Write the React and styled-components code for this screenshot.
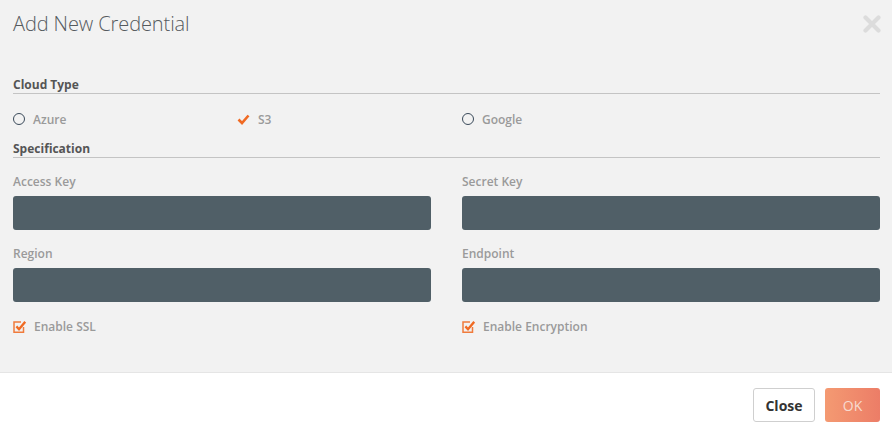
import React from 'react'
import styled, { createGlobalStyle } from 'styled-components'

const GlobalStyle = createGlobalStyle`
  html, body {
    margin: 0;
    padding: 0;
    background: #ffffff;
  }
  * { box-sizing: border-box; }
`

const clouds = [
  { name: 'Azure', checked: false },
  { name: 'S3', checked: true },
  { name: 'Google', checked: false },
]

const fields = ['Access Key', 'Secret Key', 'Region', 'Endpoint']
const toggles = ['Enable SSL', 'Enable Encryption']

const CheckMark = () => (
  <svg width="13" height="11" viewBox="0 0 13 11">
    <path d="M1.5 5.5 L5 9 L11.5 1.5" fill="none" stroke="#f06a23" strokeWidth="2.6" />
  </svg>
)

const CheckBoxIcon = () => (
  <svg width="13" height="14" viewBox="0 0 13 14">
    <path d="M10.5 7 V12.2 H1 V2 H8" fill="none" stroke="#f07b3c" strokeWidth="1.5" />
    <path d="M3.4 6.4 L6 9.2 L12.2 1.8" fill="none" stroke="#f06a23" strokeWidth="2.3" />
  </svg>
)

const App = () => {
  return (
    <Modal>
      <GlobalStyle />
      <Body>
        <Header>
          <Title>Add New Credential</Title>
          <CloseX aria-label="close">
            <svg width="18" height="18" viewBox="0 0 18 18">
              <path d="M2.5 2.5 L15.5 15.5 M15.5 2.5 L2.5 15.5" stroke="#dcdcdc" strokeWidth="4.2" strokeLinecap="round" />
            </svg>
          </CloseX>
        </Header>

        <SectionTitle>Cloud Type</SectionTitle>
        <RadioRow>
          {clouds.map(c => (
            <Option key={c.name}>
              {c.checked ? <CheckMark /> : <Radio />}
              <OptionText>{c.name}</OptionText>
            </Option>
          ))}
        </RadioRow>

        <SectionTitle>Specification</SectionTitle>
        <FieldGrid>
          {fields.map(f => (
            <Field key={f}>
              <FieldLabel>{f}</FieldLabel>
              <Input />
            </Field>
          ))}
          {toggles.map(t => (
            <Option key={t}>
              <CheckBoxIcon />
              <OptionText>{t}</OptionText>
            </Option>
          ))}
        </FieldGrid>
      </Body>
      <Footer>
        <CloseButton>Close</CloseButton>
        <OkButton>OK</OkButton>
      </Footer>
    </Modal>
  )
}

export default App

const Modal = styled.div`
width: 892px;
height: 435px;
display: flex;
flex-direction: column;
font-family: 'Open Sans', 'Liberation Sans', sans-serif;
`

const Body = styled.div`
background: #f2f2f2;
height: 372px;
padding: 0 12px 0 13px;
`

const Header = styled.div`
display: flex;
justify-content: space-between;
align-items: flex-start;
height: 78px;
padding-top: 10px;
`

const Title = styled.h1`
margin: 0;
font-family: 'Open Sans', sans-serif;
font-weight: 300;
font-size: 20px;
color: #555a5e;
letter-spacing: -0.1px;
`

const CloseX = styled.div`
margin-top: 5px;
margin-right: -1px;
width: 18px;
height: 18px;
`

const SectionTitle = styled.div`
font-family: 'Open Sans', sans-serif;
font-size: 12px;
font-weight: 700;
color: #555;
padding-bottom: 1px;
border-bottom: 1px solid #c4c4c4;
line-height: 14px;
`

const RadioRow = styled.div`
display: grid;
grid-template-columns: 224px 225px 1fr;
height: 48px;
padding-top: 2px;
align-items: center;
`

const Option = styled.div`
display: flex;
align-items: center;
gap: 8px;
height: 17px;
`

const Radio = styled.span`
width: 12px;
height: 12px;
border: 1.5px solid #3a4a5a;
border-radius: 50%;
display: inline-block;
`

const OptionText = styled.span`
font-family: 'Open Sans', sans-serif;
font-size: 12px;
font-weight: 600;
color: #9a9a9a;
`

const FieldGrid = styled.div`
display: grid;
grid-template-columns: 418px 418px;
column-gap: 31px;
padding-top: 16px;
row-gap: 16px;
`

const Field = styled.div`
display: flex;
flex-direction: column;
gap: 6px;
`

const FieldLabel = styled.label`
font-family: 'Open Sans', sans-serif;
font-size: 12px;
font-weight: 600;
color: #9a9a9a;
line-height: 16px;
`

const Input = styled.div`
height: 34px;
background: #505f67;
border-radius: 3px;
`

const Footer = styled.div`
flex: 1;
background: #ffffff;
border-top: 1px solid #e5e5e5;
display: flex;
justify-content: flex-end;
align-items: flex-start;
padding: 15px 12px 0 0;
gap: 10px;
`

const CloseButton = styled.button`
width: 62px;
height: 34px;
background: #fff;
border: 1px solid #cfcfcf;
border-radius: 3px;
font-family: 'Open Sans', sans-serif;
font-weight: 700;
font-size: 14px;
color: #333;
`

const OkButton = styled.button`
width: 55px;
height: 34px;
border: none;
border-radius: 3px;
background: linear-gradient(90deg, #f49a72, #ec7d67);
font-family: 'Open Sans', sans-serif;
font-size: 14px;
color: #f7dbd0;
`
